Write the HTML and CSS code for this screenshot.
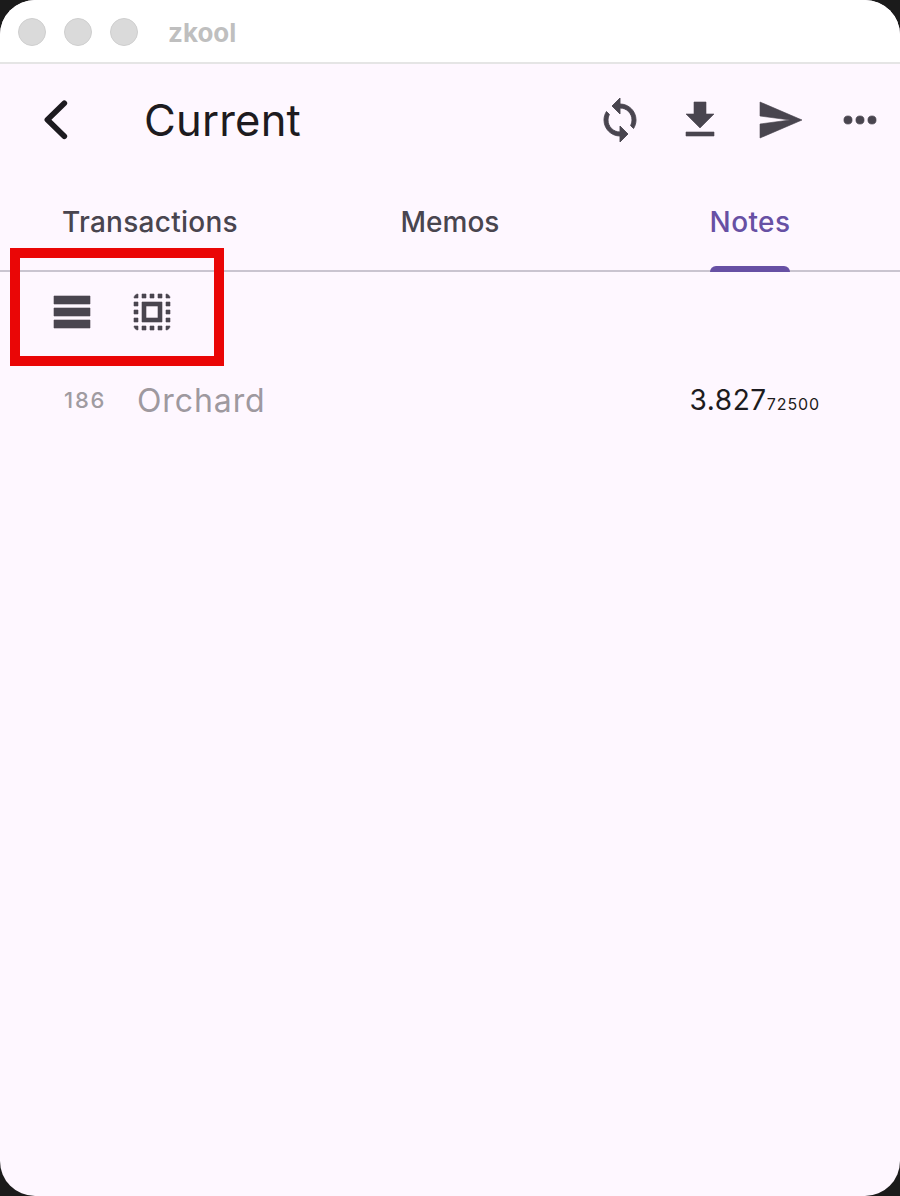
FILE: index.html
```html
<!DOCTYPE html>
<html lang="en">
<head>
<meta charset="utf-8">
<title>zkool</title>
<link rel="stylesheet" href="styles.css">
</head>
<body>
<div class="window">
  <header class="titlebar">
    <i class="light"></i><i class="light"></i><i class="light"></i>
    <span class="app-name">zkool</span>
  </header>
  <div class="appbar">
    <svg class="icon" viewBox="0 0 48 48"><path class="chevron" d="M32.300 7.200 15.400 23.700 32.300 40.300"/></svg>
    <h1 class="title"><span>Current</span></h1>
    <nav class="actions">
      <svg class="icon sync" viewBox="0 0 24 24"><path d="M12 4V1L8 5l4 4V6c3.310 0 6 2.690 6 6 0 1.010-.25 1.970-.7 2.800l1.460 1.460C19.540 15.030 20 13.570 20 12c0-4.420-3.580-8-8-8zm0 14c-3.310 0-6-2.690-6-6 0-1.010.25-1.970.7-2.800L5.240 7.740C4.460 8.970 4 10.430 4 12c0 4.420 3.580 8 8 8v3l4-4-4-4v3z"/></svg>
      <svg class="icon" viewBox="0 0 24 24"><path d="M19 9h-4V3H9v6H5l7 7 7-7zM5 18v2h14v-2H5z"/></svg>
      <svg class="icon" viewBox="0 0 24 24"><path d="M2.010 21 23 12 2.010 3 2 10l15 2-15 2z"/></svg>
      <svg class="icon" viewBox="0 0 24 24"><circle cx="6" cy="12" r="2.050"/><circle cx="12" cy="12" r="2.050"/><circle cx="18" cy="12" r="2.050"/></svg>
    </nav>
  </div>
  <div class="tabs">
    <div class="tab"><span class="tab-label transactions">Transactions</span></div>
    <div class="tab"><span class="tab-label memos">Memos</span></div>
    <div class="tab"><span class="tab-label active">Notes</span></div>
  </div>
  <div class="toolbar">
    <svg class="icon" viewBox="0 0 24 24"><path d="M21 8H3V4h18v4zM21 10H3v4h18zM21 16H3v4h18z"/></svg>
    <svg class="icon" viewBox="0 0 24 24"><path d="M3 5h2V3c-1.100 0-2 .9-2 2zm0 8h2v-2H3v2zm4 8h2v-2H7v2zM3 9h2V7H3v2zm10-6h-2v2h2V3zm6 0v2h2c0-1.100-.9-2-2-2zM5 21v-2H3c0 1.100.9 2 2 2zm-2-4h2v-2H3v2zM9 3H7v2h2V3zm2 18h2v-2h-2v2zm8-8h2v-2h-2v2zm0 8c1.100 0 2-.9 2-2h-2v2zm0-12h2V7h-2v2zm0 8h2v-2h-2v2zm-4 4h2v-2h-2v2zm0-16h2V3h-2v2zM7 17h10V7H7v10zm2-8h6v6H9V9z"/></svg>
    <div class="highlight"></div>
  </div>
  <div class="note">
    <span class="height">186</span>
    <span class="pool">Orchard</span>
    <span class="amount">3.827<small class="fraction">72500</small></span>
  </div>
</div>
</body>
</html>
```
FILE: styles.css
```css
* { box-sizing: border-box; }
body { margin: 0; background: #1b1b1b; font-family: Inter, Roboto, sans-serif; }
.window {
  height: 1196px;
  background: #fef7ff;
  border-radius: 35px;
  overflow: hidden;
  color: #1d1b20;
}
.titlebar {
  display: flex;
  align-items: center;
  height: 64px;
  padding: 2px 0 0 18px;
  gap: 18px;
  background: #fff;
  border-bottom: 2px solid #e5e5e5;
}
.light { width: 28px; height: 28px; border-radius: 50%; background: #dadada; border: 1px solid #cecece; }
.app-name { margin-left: 12px; padding-top: 2px; font-size: 26px; font-weight: 700; color: #bfbfbf; line-height: 32px; }
.appbar { display: flex; align-items: center; height: 112px; padding: 0 16px 0 32px; }
.icon { width: 48px; height: 48px; fill: #49454f; stroke: #49454f; stroke-width: 0.3; flex: none; display: block; }
.sync { stroke-width: 0.45; }
.chevron { fill: none; stroke: #1d1b20; stroke-width: 5.700; stroke-linecap: round; stroke-linejoin: round; }
.title { flex: 1; margin: 0 0 0 64px; font-size: 43.500px; font-weight: 400; line-height: 56px; letter-spacing: 0.220px; }
.actions { display: flex; gap: 32px; }
.tabs { display: grid; grid-template-columns: repeat(3, 1fr); height: 96px; border-bottom: 2px solid #cac4d0; }
.tab { display: flex; justify-content: center; height: 96px; }
.tab-label { height: 96px; padding-top: 28px; font-size: 28px; line-height: 36px; font-weight: 500; color: #49454f; white-space: nowrap; }
.transactions { letter-spacing: 0.270px; }
.active { color: #6750a4; position: relative; letter-spacing: 0.400px; }
.active::after { content: ""; position: absolute; left: 0; right: 0; bottom: 0; height: 6px; background: #6750a4; border-radius: 6px 6px 0 0; }
.toolbar { position: relative; display: flex; align-items: center; height: 80px; padding-left: 48px; gap: 32px; }
.highlight { position: absolute; left: 10px; top: -24px; width: 214px; height: 118px; border: 10px solid #ea0606; }
.note { display: flex; align-items: center; height: 96px; padding: 0 80px 0 64px; }
.height { width: 73px; font-size: 22px; font-weight: 500; letter-spacing: 1.800px; color: #a09ba1; }
.pool { flex: 1; padding-top: 1px; font-size: 32px; letter-spacing: 0.900px; color: #9e999f; }
.amount { font-size: 28px; letter-spacing: 0.600px; }
.fraction { font-size: 16px; letter-spacing: 0.900px; }
```
